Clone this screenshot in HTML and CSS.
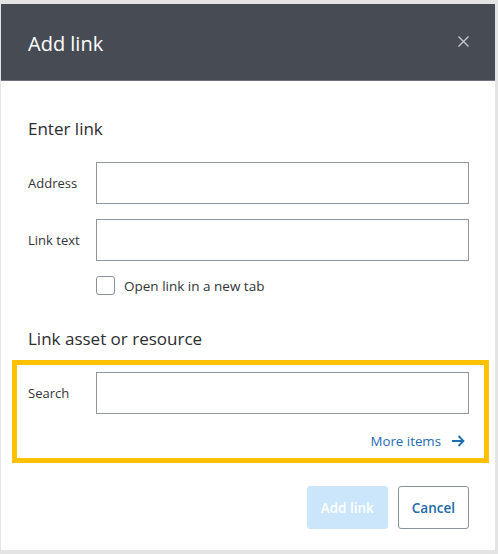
FILE: index.html
```html
<!DOCTYPE html>
<html>
	<head>
		<meta charset="UTF-8">
		<title>Add link</title>
		<link rel="stylesheet" href="styles.css">
	</head>
	<body>
		<div class="dialog">
			<div class="dialog-header">
				<h1 class="dialog-title">Add link</h1>
				<button class="close-btn" type="button" aria-label="Close">
					<svg width="11" height="11" viewBox="0 0 11 11"><path d="M0.5 0.5L10.5 10.5M10.5 0.5L0.5 10.5" stroke="#c9cbd0" stroke-width="1.3" fill="none"/></svg>
				</button>
			</div>
			<div class="dialog-body">
				<h2 class="section-title">Enter link</h2>
				<div class="field">
					<label class="field-label" for="address">Address</label>
					<input class="field-input" id="address" type="text">
				</div>
				<div class="field">
					<label class="field-label" for="linktext">Link text</label>
					<input class="field-input" id="linktext" type="text">
				</div>
				<label class="check">
					<input class="check-box" type="checkbox">
					<span>Open link in a new tab</span>
				</label>

				<h2 class="section-title second">Link asset or resource</h2>
				<div class="search-block">
					<div class="field">
						<label class="field-label" for="search">Search</label>
						<input class="field-input" id="search" type="text">
					</div>
					<div class="more-row">
						<a href="#" class="more-link">More items
							<svg width="14" height="12" viewBox="0 0 14 12"><path d="M1 6H12.5M7.5 1L12.5 6L7.5 11" stroke="#1b6db3" stroke-width="1.8" fill="none"/></svg>
						</a>
					</div>
				</div>

				<div class="actions">
					<button class="btn btn-primary" type="button" disabled>Add link</button>
					<button class="btn btn-secondary" type="button">Cancel</button>
				</div>
			</div>
		</div>
	</body>
</html>
```

FILE: styles.css
```css
* {
	margin: 0;
	padding: 0;
	box-sizing: border-box;
}

body {
	background: #e4e4e4;
	font-family: "Open Sans", "Noto Sans", sans-serif;
	color: #323436;
	padding: 4px 0 0 1px;
}

.dialog {
	width: 494px;
	height: 546px;
	background: #fff;
}

.dialog-header {
	height: 77px;
	background: #474b54;
	border-bottom: 1px solid #70737a;
	display: flex;
	align-items: center;
	justify-content: space-between;
	padding: 0 26px 1px 27px;
}

.dialog-title {
	font-size: 20px;
	font-weight: 400;
	color: #fff;
	margin-top: 4px;
}

.close-btn {
	background: none;
	border: none;
	width: 11px;
	height: 11px;
	display: flex;
}

.dialog-body {
	padding: 36px 26px 0 27px;
}

.section-title {
	font-size: 17px;
	font-weight: 400;
	line-height: 24px;
	color: #2b2d30;
	margin-bottom: 21px;
}

.section-title.second {
	margin-top: 32px;
	margin-bottom: 9px;
}

.field {
	display: flex;
	align-items: center;
	margin-bottom: 15px;
}

.field-label {
	width: 68px;
	flex: none;
	font-size: 13px;
}

.field-input {
	flex: 1;
	height: 42px;
	border: 1px solid #8f959e;
	border-radius: 0;
	background: #fff;
	font: inherit;
	padding: 0 10px;
	outline: none;
}

.check {
	display: flex;
	align-items: center;
	margin-left: 68px;
	font-size: 13.5px;
	gap: 9px;
	height: 19px;
}

.check-box {
	appearance: none;
	width: 19px;
	height: 19px;
	border: 1px solid #8c929b;
	border-radius: 3px;
	background: #fff;
}

.search-block {
	border: 5px solid #ffc000;
	margin: 0 -20px 0 -16px;
	padding: 7px 15px 8px 11px;
}

.search-block .field {
	margin-bottom: 0;
}

.more-row {
	display: flex;
	justify-content: flex-end;
	margin-top: 18px;
	padding-right: 4px;
}

.more-link {
	display: flex;
	align-items: center;
	gap: 10px;
	color: #1b6db3;
	text-decoration: none;
	font-size: 13.3px;
	line-height: 18px;
}

.actions {
	display: flex;
	justify-content: flex-end;
	gap: 10px;
	margin-top: 23px;
}

.btn {
	height: 43px;
	padding: 0 13px;
	border-radius: 3px;
	font-family: inherit;
	font-size: 13.5px;
	font-weight: 600;
	white-space: nowrap;
}

.btn-primary {
	background: #cbe5fb;
	border: 1px solid #cbe5fb;
	color: #fff;
}

.btn-secondary {
	background: #fff;
	border: 1px solid #8d939b;
	color: #1a68a8;
}
```
